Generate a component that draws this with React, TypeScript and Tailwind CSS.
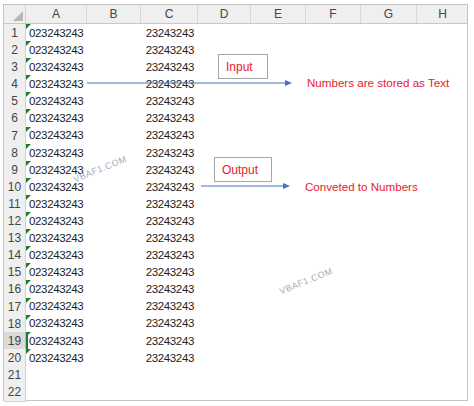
const cols = ['A', 'B', 'C', 'D', 'E', 'F', 'G', 'H']
const rows = Array.from({ length: 22 }, (_, i) => i + 1)

const gridCols =
	'grid grid-cols-[22px_61px_54px_57px_53px_55px_55px_56px_51px]'

function Arrow({ x1, x2, y }: { x1: number; x2: number; y: number }) {
	return (
		<svg
			className="absolute left-0 top-0"
			width={474}
			height={406}
			viewBox="0 0 474 406"
		>
			<line x1={x1} y1={y} x2={x2 - 6} y2={y} stroke="#4472c4" strokeWidth="1.2" />
			<polygon points={`${x2},${y} ${x2 - 7},${y - 3} ${x2 - 7},${y + 3}`} fill="#4472c4" />
		</svg>
	)
}

export default function App() {
	return (
		<div className="relative h-[406px] w-[474px] overflow-hidden bg-white pl-[3px] pt-[4px] font-['Liberation_Sans',Arial,sans-serif]">
			<div className="w-[465px] border border-[#c4c4c4] bg-white">
				{/* column header */}
				<div className={`${gridCols} h-[19px] border-b border-[#c8c8c8] bg-[#efefef] text-[12px] text-[#444]`}>
					<div className="relative border-r border-[#d0d0d0]">
						<div className="absolute bottom-[2px] right-[2px] h-0 w-0 border-b-[10px] border-l-[10px] border-b-[#b7b7b7] border-l-transparent" />
					</div>
					{cols.map((c) => (
						<div
							key={c}
							className="flex items-center justify-center border-r border-[#d8d8d8] last:border-r-0"
						>
							{c}
						</div>
					))}
				</div>

				{rows.map((r) => (
					<div key={r} className={`${gridCols} h-[17.1px]`}>
						<div
							className={`flex items-center justify-center border-b border-r text-[12px] text-[#444] ${
								r === 19
									? 'border-[#b8b8b8] bg-[#dadada]'
									: 'border-[#d0d0d0] bg-[#efefef]'
							}`}
						>
							{r}
						</div>
						<div className="relative flex items-center pl-[3px] text-[11.5px] tracking-[-0.35px] text-[#222]">
							{r === 19 && (
								<div className="absolute bottom-0 left-0 top-0 w-[2px] bg-[#217346]" />
							)}
							{r <= 20 && (
								<>
									<div className="absolute left-0 top-0 h-0 w-0 border-r-[5px] border-t-[5px] border-r-transparent border-t-[#1e7b34]" />
									023243243
								</>
							)}
						</div>
						<div />
						<div className="flex items-center justify-end pr-[4px] text-[11.5px] tracking-[-0.35px] text-[#222]">
							{r <= 20 && '23243243'}
						</div>
						<div />
						<div />
						<div />
						<div />
						<div />
					</div>
				))}
			</div>

			{/* annotations */}
			<div className="absolute left-[218px] top-[54px] flex h-[25px] w-[50px] items-center border border-[#a6a6a6] bg-white pl-[7px] text-[12px] text-[#e8202a]">
				Input
			</div>
			<Arrow x1={87} x2={292} y={83} />
			<div className="absolute left-[307px] top-[76px] text-[11.6px] leading-[14px] text-[#e8202a]">
				Numbers are stored as Text
			</div>

			<div className="absolute left-[214px] top-[157px] flex h-[25px] w-[58px] items-center border border-[#a6a6a6] bg-white pl-[7px] text-[12px] text-[#e8202a]">
				Output
			</div>
			<Arrow x1={201} x2={290} y={186} />
			<div className="absolute left-[305px] top-[180px] text-[11.6px] leading-[14px] text-[#e8202a]">
				Conveted to Numbers
			</div>

			{/* watermarks */}
			<div className="absolute left-[72px] top-[163px] -rotate-[22deg] text-[9px] tracking-[0.5px] text-[#a3abbc]">
				VBAF1.COM
			</div>
			<div className="absolute left-[278px] top-[275px] -rotate-[22deg] text-[9px] tracking-[0.5px] text-[#a3abbc]">
				VBAF1.COM
			</div>
		</div>
	)
}
